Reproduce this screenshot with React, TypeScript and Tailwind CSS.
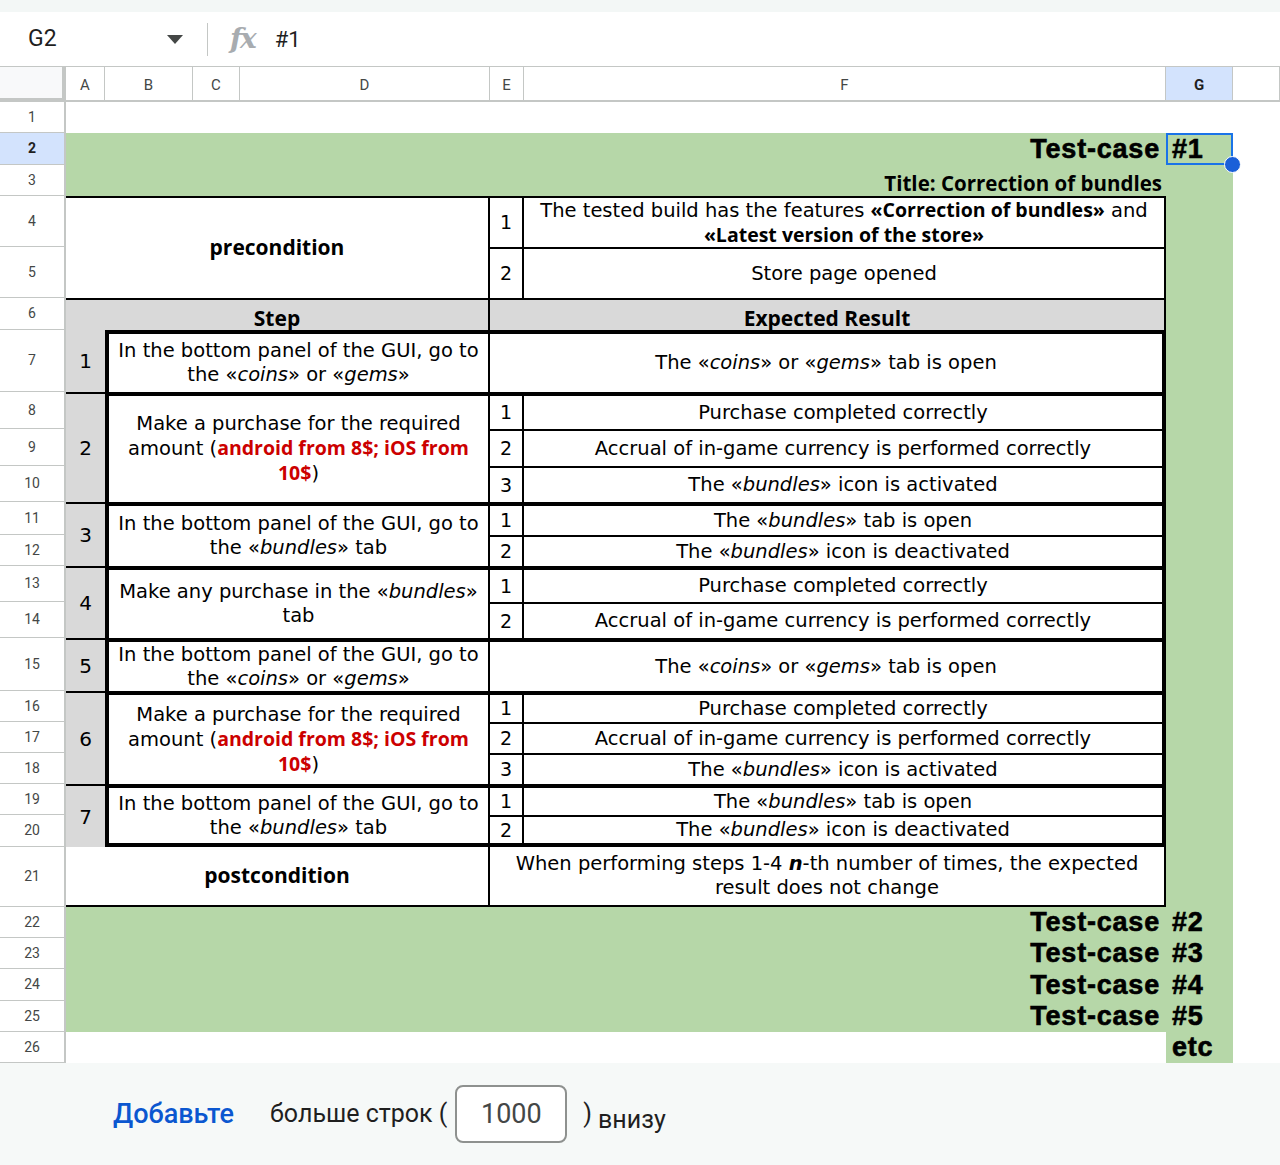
import type { ReactNode } from 'react';

type Result = { row: string; text: ReactNode };
type Step = {
  n: number;
  rows: string;
  text: ReactNode;
  results: Result[];
  last?: boolean;
};

const I = ({ children }: { children: ReactNode }) => (
  <>
    «<i>{children}</i>»
  </>
);

// inline bold: Open Sans bold is narrower than DejaVu bold, closer to the reference
const B = ({ children, red }: { children: ReactNode; red?: boolean }) => (
  <b className={`font-['Open_Sans',sans-serif] font-bold ${red ? 'text-[#cc0000]' : ''}`}>{children}</b>
);

const goCoins = (
  <>
    In the bottom panel of the GUI, go to
    <br />
    the <I>coins</I> or <I>gems</I>
  </>
);
const purchaseAmount = (
  <>
    Make a purchase for the required
    <br />
    amount (<B red>android from 8$; iOS from</B>
    <br />
    <B red>10$</B>)
  </>
);
const goBundles = (
  <>
    In the bottom panel of the GUI, go to
    <br />
    the <I>bundles</I> tab
  </>
);
const coinsOpen = (
  <>
    The <I>coins</I> or <I>gems</I> tab is open
  </>
);
const completed = 'Purchase completed correctly';
const accrual = 'Accrual of in-game currency is performed correctly';
const activated = (
  <>
    The <I>bundles</I> icon is activated
  </>
);
const tabOpen = (
  <>
    The <I>bundles</I> tab is open
  </>
);
const deactivated = (
  <>
    The <I>bundles</I> icon is deactivated
  </>
);

const steps: Step[] = [
  { n: 1, rows: 'row-start-8', text: goCoins, results: [{ row: 'row-start-8', text: coinsOpen }] },
  {
    n: 2,
    rows: 'row-start-9 row-span-3',
    text: purchaseAmount,
    results: [
      { row: 'row-start-9', text: completed },
      { row: 'row-start-10', text: accrual },
      { row: 'row-start-11', text: activated },
    ],
  },
  {
    n: 3,
    rows: 'row-start-12 row-span-2',
    text: goBundles,
    results: [
      { row: 'row-start-12', text: tabOpen },
      { row: 'row-start-13', text: deactivated },
    ],
  },
  {
    n: 4,
    rows: 'row-start-14 row-span-2',
    text: (
      <>
        Make any purchase in the <I>bundles</I>
        <br />
        tab
      </>
    ),
    results: [
      { row: 'row-start-14', text: completed },
      { row: 'row-start-15', text: accrual },
    ],
  },
  { n: 5, rows: 'row-start-16', text: goCoins, results: [{ row: 'row-start-16', text: coinsOpen }] },
  {
    n: 6,
    rows: 'row-start-17 row-span-3',
    text: purchaseAmount,
    results: [
      { row: 'row-start-17', text: completed },
      { row: 'row-start-18', text: accrual },
      { row: 'row-start-19', text: activated },
    ],
  },
  {
    n: 7,
    rows: 'row-start-20 row-span-2',
    text: goBundles,
    results: [
      { row: 'row-start-20', text: tabOpen },
      { row: 'row-start-21', text: deactivated },
    ],
    last: true,
  },
];

const rowHeaderRows = [
  'row-start-2',
  'row-start-3',
  'row-start-4',
  'row-start-5',
  'row-start-6',
  'row-start-7',
  'row-start-8',
  'row-start-9',
  'row-start-10',
  'row-start-11',
  'row-start-12',
  'row-start-13',
  'row-start-14',
  'row-start-15',
  'row-start-16',
  'row-start-17',
  'row-start-18',
  'row-start-19',
  'row-start-20',
  'row-start-21',
  'row-start-22',
  'row-start-23',
  'row-start-24',
  'row-start-25',
  'row-start-26',
  'row-start-27',
];

const colHeaders = ['A', 'B', 'C', 'D', 'E', 'F', 'G', ''];

const label = "font-['Open_Sans',sans-serif] text-[21px] font-bold";
const big =
  "font-['Liberation_Sans',sans-serif] text-[27px] font-bold tracking-[0.8px] leading-[31px] [-webkit-text-stroke:0.6px_black]";

function StepRows({ step }: { step: Step }) {
  const { n, rows, text, results, last } = step;
  const single = results.length === 1;
  return (
    <>
      <div
        className={`${rows} col-start-2 flex items-center justify-center bg-[#d9d9d9] text-[20px] ${n === 1 ? '' : 'border-t-2 border-black'}`}
      >
        {n}
      </div>
      <div
        className={`${rows} col-start-3 col-span-3 flex items-center justify-center whitespace-nowrap border-t-4 border-l-4 border-r-2 border-black bg-white text-center leading-[24px] ${last ? 'border-b-4' : ''}`}
      >
        <div>{text}</div>
      </div>
      {single ? (
        <div
          className={`${results[0].row} col-start-6 col-span-2 flex items-center justify-center whitespace-nowrap border-t-4 border-r-4 border-black bg-white ${last ? 'border-b-4' : ''}`}
        >
          {results[0].text}
        </div>
      ) : (
        results.map((r, i) => {
          const top = i === 0 ? 'border-t-4' : 'border-t-2';
          const bottom = last && i === results.length - 1 ? 'border-b-4' : '';
          return (
            <div key={i} className="contents">
              <div
                className={`${r.row} col-start-6 flex items-center justify-center border-r-2 border-black bg-white text-[19px] ${top} ${bottom}`}
              >
                {i + 1}
              </div>
              <div
                className={`${r.row} col-start-7 flex items-center justify-center whitespace-nowrap border-r-4 border-black bg-white ${top} ${bottom}`}
              >
                {r.text}
              </div>
            </div>
          );
        })
      )}
    </>
  );
}

function FormulaBar() {
  return (
    <div className="flex h-[55px] shrink-0 items-center border-b border-[#c4c7c5] bg-white font-['Roboto',sans-serif] text-[#1f1f1f]">
      <div className="ml-[28px] flex w-[155px] items-center justify-between">
        <span className="text-[23px]">G2</span>
        <svg width="16" height="9" viewBox="0 0 16 9">
          <path d="M0 0h16L8 9z" fill="#444746" />
        </svg>
      </div>
      <div className="ml-[24px] h-[33px] w-px bg-[#c4c7c5]" />
      <span className="ml-[22px] font-['DejaVu_Serif',serif] text-[28px] font-bold italic leading-none tracking-[-2px] text-[#a8acb0]">
        fx
      </span>
      <span className="ml-[20px] text-[22px]">#1</span>
    </div>
  );
}

function Sheet() {
  return (
    <div className="grid shrink-0 grid-cols-[66px_39px_88px_47px_250px_34px_642px_67px_1fr] grid-rows-[35px_31px_32px_31px_51px_51px_32px_62px_37px_37px_36px_33px_31px_36px_36px_53px_31px_31px_31px_31px_32px_60px_31px_31px_32px_31px_31px] bg-white font-['DejaVu_Sans',sans-serif] text-[19.5px] text-black">
      {/* column headers */}
      <div className="col-start-1 row-start-1 border-b-4 border-r-4 border-[#c4c7c5] bg-[#f8f9fa]" />
      {colHeaders.map((c) => (
        <div
          key={c || 'blank'}
          className={`row-start-1 flex items-center justify-center border-b-2 border-r border-[#c4c7c5] pt-[4px] font-['Roboto',sans-serif] text-[15px] ${c === 'G' ? 'bg-[#d3e3fd] font-bold text-[#1f1f1f]' : 'text-[#444746]'}`}
        >
          {c}
        </div>
      ))}

      {/* row headers */}
      {rowHeaderRows.map((r, i) => (
        <div
          key={r}
          className={`${r} col-start-1 flex items-center justify-center border-b border-r-2 border-[#c4c7c5] font-['Roboto',sans-serif] text-[14px] ${i === 1 ? 'bg-[#d3e3fd] font-bold text-[#1f1f1f]' : 'text-[#444746]'}`}
        >
          {i + 1}
        </div>
      ))}

      {/* green fills */}
      <div className="col-start-2 col-span-6 row-start-3 row-span-2 bg-[#b6d7a8]" />
      <div className="col-start-8 row-start-3 row-span-25 bg-[#b6d7a8]" />
      <div className="col-start-2 col-span-6 row-start-23 row-span-4 bg-[#b6d7a8]" />

      {/* title */}
      <div className={`col-start-7 row-start-3 flex items-end justify-end pr-[6px] ${big}`}>
        Test-case
      </div>
      <div className={`relative col-start-8 row-start-3 flex items-end pl-[6px] ${big}`}>
        #1
        <div className="absolute inset-0 border-2 border-[#1a73e8]" />
        <div className="absolute -bottom-[8px] -right-[8px] h-[17px] w-[17px] rounded-full border border-white bg-[#1a5fd8]" />
      </div>
      <div className="col-start-2 col-span-6 row-start-4 flex items-end justify-end pr-[4px] font-['Open_Sans',sans-serif] text-[20.5px] font-bold leading-[26px]">
        Title: Correction of bundles
      </div>

      {/* precondition */}
      <div className={`col-start-2 col-span-4 row-start-5 row-span-2 flex items-center justify-center border-r-2 border-t-2 border-black bg-white ${label}`}>
        precondition
      </div>
      <div className="col-start-6 row-start-5 flex items-center justify-center border-r-2 border-t-2 border-black bg-white text-[19px]">
        1
      </div>
      <div className="col-start-7 row-start-5 flex items-center justify-center whitespace-nowrap border-r-2 border-t-2 border-black bg-white text-center leading-[24px]">
        <div>
          The tested build has the features <B>«Correction of bundles»</B> and
          <br />
          <B>«Latest version of the store»</B>
        </div>
      </div>
      <div className="col-start-6 row-start-6 flex items-center justify-center border-r-2 border-t-2 border-black bg-white text-[19px]">
        2
      </div>
      <div className="col-start-7 row-start-6 flex items-center justify-center border-r-2 border-t-2 border-black bg-white">
        Store page opened
      </div>

      {/* headers */}
      <div className={`col-start-2 col-span-4 row-start-7 flex items-end justify-center border-r-2 border-t-2 border-black bg-[#d9d9d9] leading-[24px] ${label}`}>
        Step
      </div>
      <div className={`col-start-6 col-span-2 row-start-7 flex items-end justify-center border-r-2 border-t-2 border-black bg-[#d9d9d9] leading-[24px] ${label}`}>
        Expected Result
      </div>

      {steps.map((s) => (
        <StepRows key={s.n} step={s} />
      ))}

      {/* postcondition */}
      <div className={`col-start-2 col-span-4 row-start-22 flex items-center justify-center border-b-2 border-r-2 border-black bg-white ${label}`}>
        postcondition
      </div>
      <div className="col-start-6 col-span-2 row-start-22 flex items-center justify-center whitespace-nowrap border-b-2 border-r-2 border-black bg-white text-center leading-[24px]">
        <div>
          When performing steps 1-4 <b className="italic">n</b>-th number of times, the expected
          <br />
          result does not change
        </div>
      </div>

      {/* further test cases */}
      {[
        ['row-start-23', '#2'],
        ['row-start-24', '#3'],
        ['row-start-25', '#4'],
        ['row-start-26', '#5'],
      ].map(([r, n]) => (
        <div key={n} className="contents">
          <div className={`${r} col-start-7 flex items-center justify-end pr-[6px] ${big}`}>
            Test-case
          </div>
          <div className={`${r} col-start-8 flex items-center whitespace-nowrap pl-[6px] ${big}`}>
            {n}
          </div>
        </div>
      ))}
      <div className={`col-start-8 row-start-27 flex items-center pl-[6px] ${big}`}>
        etc
      </div>
    </div>
  );
}

function Footer() {
  return (
    <div className="flex flex-1 items-center bg-[#f6f9f8] pl-[113px] font-['Roboto',sans-serif] text-[25px] text-[#1f1f1f]">
      <span className="text-[27px] font-medium text-[#0b57d0]">Добавьте</span>
      <span className="ml-[36px]">больше строк (</span>
      <span className="ml-[8px] flex h-[58px] w-[112px] items-center justify-center rounded-[8px] border-2 border-[#8e918f] bg-white text-[27px] text-[#444746]">
        1000
      </span>
      <span className="ml-[16px]">)</span>
      <span className="ml-[6px] mt-[12px]">внизу</span>
    </div>
  );
}

export default function App() {
  return (
    <div className="flex h-[1165px] w-[1280px] flex-col overflow-hidden bg-white">
      <div className="h-[12px] shrink-0 bg-[#f3f7f6]" />
      <FormulaBar />
      <Sheet />
      <Footer />
    </div>
  );
}
